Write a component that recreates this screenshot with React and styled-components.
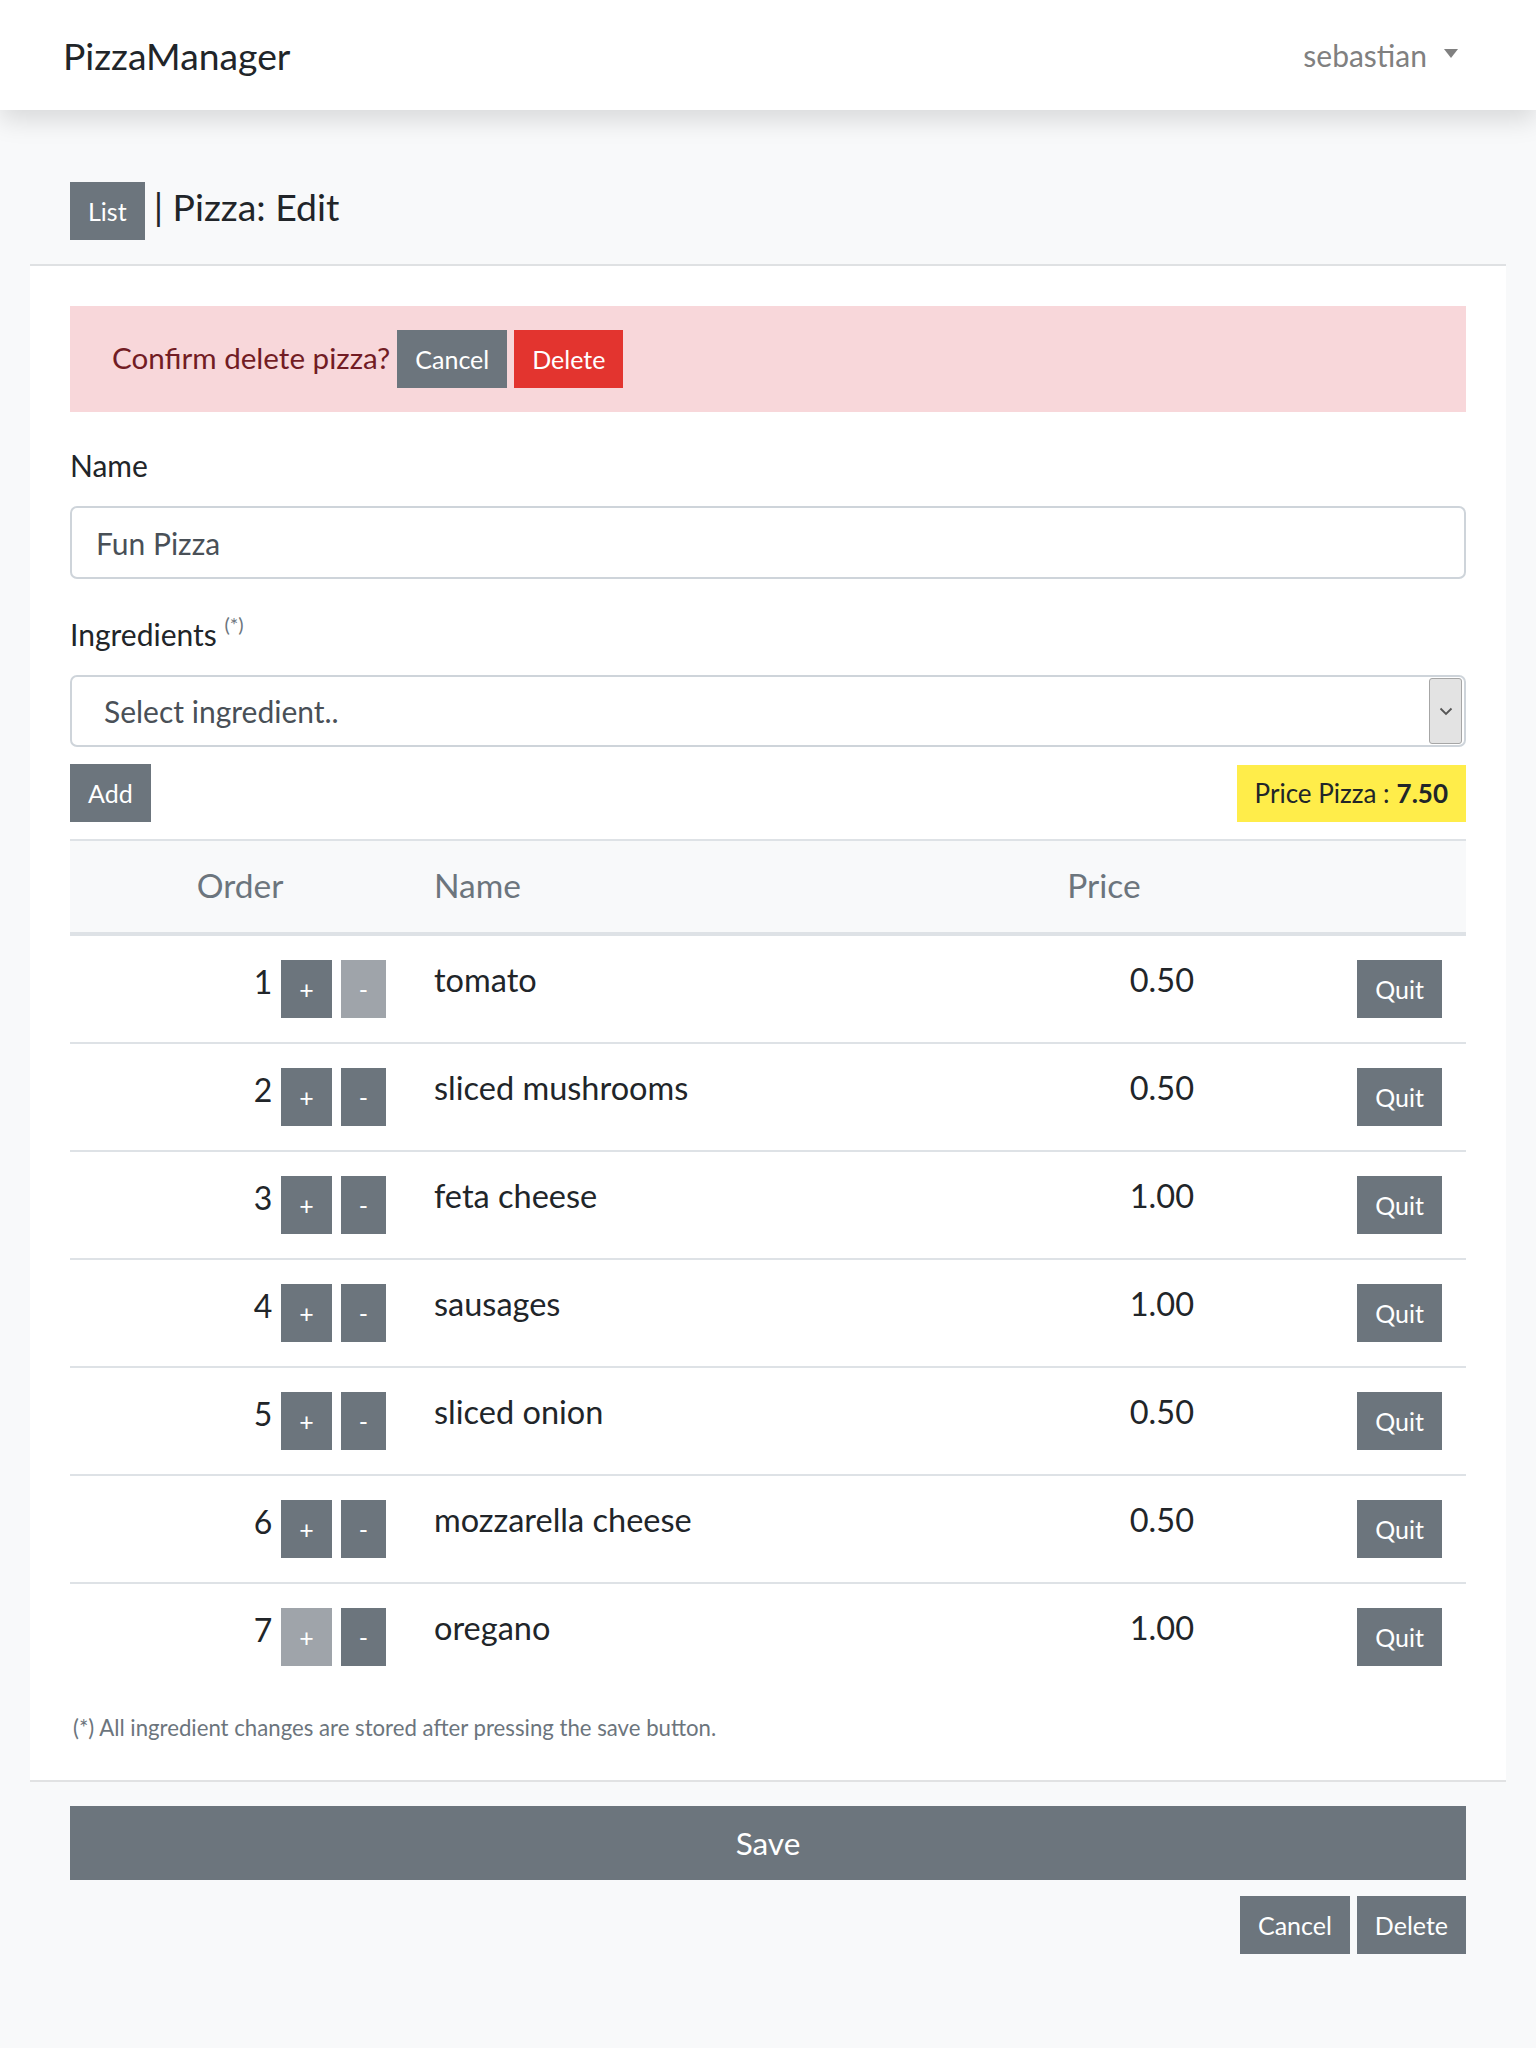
import styled, { createGlobalStyle } from "styled-components";

const ingredients = [
  { order: 1, name: "tomato", price: "0.50" },
  { order: 2, name: "sliced mushrooms", price: "0.50" },
  { order: 3, name: "feta cheese", price: "1.00" },
  { order: 4, name: "sausages", price: "1.00" },
  { order: 5, name: "sliced onion", price: "0.50" },
  { order: 6, name: "mozzarella cheese", price: "0.50" },
  { order: 7, name: "oregano", price: "1.00" },
];

const App = () => {
  return (
    <>
      <GlobalStyle />
      <Navbar>
        <Brand>PizzaManager</Brand>
        <UserMenu>
          sebastian
          <Caret />
        </UserMenu>
      </Navbar>

      <Card>
        <CardHeader>
          <Button>List</Button>
          <Title>| Pizza: Edit</Title>
        </CardHeader>

        <CardBody>
          <Alert>
            <AlertText>Confirm delete pizza?</AlertText>
            <Button>Cancel</Button>
            <Button $variant="danger">Delete</Button>
          </Alert>

          <FormGroup>
            <Label>Name</Label>
            <Input defaultValue="Fun Pizza" />
          </FormGroup>

          <FormGroup $tight>
            <Label>
              Ingredients <Sup>(*)</Sup>
            </Label>
            <SelectBox>
              <SelectText>Select ingredient..</SelectText>
              <SelectArrow>
                <svg width="14" height="9" viewBox="0 0 14 9">
                  <path
                    d="M1.5 1.5 L7 7 L12.5 1.5"
                    fill="none"
                    stroke="#555"
                    strokeWidth="1.8"
                  />
                </svg>
              </SelectArrow>
            </SelectBox>
          </FormGroup>

          <Toolbar>
            <Button>Add</Button>
            <PriceBadge>
              Price Pizza : <strong>7.50</strong>
            </PriceBadge>
          </Toolbar>

          <Table>
            <HeadRow>
              <HeadCell $align="center">Order</HeadCell>
              <HeadCell>Name</HeadCell>
              <HeadCell $align="center">Price</HeadCell>
              <HeadCell />
            </HeadRow>
            {ingredients.map((item, i) => (
              <Row key={item.order} $first={i === 0}>
                <OrderCell>
                  <OrderNumber>{item.order}</OrderNumber>
                  <Button $disabled={i === ingredients.length - 1}>+</Button>
                  <Button $disabled={i === 0}>-</Button>
                </OrderCell>
                <Cell>{item.name}</Cell>
                <Cell $align="right">{item.price}</Cell>
                <Cell $align="right">
                  <Button>Quit</Button>
                </Cell>
              </Row>
            ))}
          </Table>

          <Note>(*) All ingredient changes are stored after pressing the save button.</Note>
        </CardBody>

        <CardFooter>
          <SaveButton>Save</SaveButton>
          <FooterActions>
            <Button>Cancel</Button>
            <Button>Delete</Button>
          </FooterActions>
        </CardFooter>
      </Card>
    </>
  );
};

export default App;

const GlobalStyle = createGlobalStyle`
  * {
    box-sizing: border-box;
  }
  body {
    margin: 0;
    background: #f8f9fa;
    font-family: Lato, "Open Sans", sans-serif;
    color: #212529;
    min-height: 2048px;
  }
`;

const Navbar = styled.nav`
  height: 110px;
  background: #fff;
  display: flex;
  align-items: center;
  justify-content: space-between;
  padding: 0 78px 0 63px;
  box-shadow: 0 10px 24px rgba(0, 0, 0, 0.13);
  position: relative;
`;

const Brand = styled.div`
  font-size: 37.3px;
  color: #212529;
`;

const UserMenu = styled.div`
  display: flex;
  align-items: center;
  gap: 17px;
  font-size: 30px;
  color: #808080;
`;

const Caret = styled.span`
  width: 0;
  height: 0;
  border-left: 7.5px solid transparent;
  border-right: 7.5px solid transparent;
  border-top: 9px solid #808080;
  margin-top: -4px;
`;

const Card = styled.div`
  margin: 0 30px;
`;

const CardHeader = styled.div`
  display: flex;
  align-items: center;
  padding: 72px 40px 24px;
  border-bottom: 2px solid #dfe1e3;
`;

const Title = styled.h4`
  margin: 0 0 0 9px;
  font-weight: 400;
  font-size: 37.4px;
  line-height: 46px;
  padding-bottom: 8px;
`;

const CardBody = styled.div`
  background: #fff;
  padding: 40px 40px 36px;
  border-bottom: 2px solid #e1e2e3;
`;

const Button = styled.button`
  height: 58px;
  padding: 0 18px;
  border: none;
  border-radius: 0;
  font-family: inherit;
  font-size: 25px;
  color: #fff;
  background: ${(p) => (p.$variant === "danger" ? "#e3342f" : "#6c757d")};
  opacity: ${(p) => (p.$disabled ? 0.65 : 1)};
  cursor: pointer;
  flex-shrink: 0;
`;

const Alert = styled.div`
  display: flex;
  align-items: center;
  gap: 7px;
  background: #f8d7da;
  padding: 24px 42px;
  margin-bottom: 31px;
`;

const AlertText = styled.span`
  font-size: 29.6px;
  color: #721c24;
  padding-bottom: 4px;
`;

const FormGroup = styled.div`
  margin-bottom: ${(p) => (p.$tight ? "17px" : "33px")};
`;

const Label = styled.label`
  display: block;
  font-size: 30px;
  line-height: 45px;
  margin-bottom: 18px;
`;

const Sup = styled.sup`
  font-size: 20px;
  color: #6c757d;
  vertical-align: 14px;
  line-height: 0;
`;

const Input = styled.input`
  display: block;
  width: 100%;
  height: 73px;
  padding: 0 24px;
  font-family: inherit;
  font-size: 30px;
  color: #495057;
  border: 2px solid #ced4da;
  border-radius: 7px;
  outline: none;
`;

const SelectBox = styled.div`
  display: flex;
  align-items: center;
  justify-content: space-between;
  height: 72px;
  padding: 0 2px 0 32px;
  border: 2px solid #ced4da;
  border-radius: 7px;
`;

const SelectText = styled.span`
  font-size: 30px;
  color: #495057;
`;

const SelectArrow = styled.span`
  width: 33px;
  height: 66px;
  display: flex;
  align-items: center;
  justify-content: center;
  background: #e3e3e3;
  border: 1px solid #a6a6a6;
  border-radius: 3px;
`;

const Toolbar = styled.div`
  display: flex;
  justify-content: space-between;
  align-items: center;
  margin-bottom: 17px;
`;

const PriceBadge = styled.div`
  height: 57px;
  display: flex;
  align-items: center;
  gap: 7px;
  padding: 0 18px;
  background: #ffed4a;
  font-size: 26px;

  strong {
    font-weight: 700;
  }
`;

const Table = styled.div`
  display: grid;
  grid-template-columns: 340px 580px 228px 248px;
`;

const HeadRow = styled.div`
  display: contents;
`;

const HeadCell = styled.div`
  background: #f8f9fa;
  border-top: 2px solid #dee2e6;
  border-bottom: 4px solid #dee2e6;
  padding: 24px 24px 27px;
  font-size: 33.5px;
  line-height: 40px;
  color: #6c757d;
  text-align: ${(p) => p.$align || "left"};
`;

const Row = styled.div`
  display: contents;

  & > div {
    border-top: ${(p) => (p.$first ? "none" : "2px solid #dee2e6")};
  }
`;

const Cell = styled.div`
  padding: 24px;
  font-size: 32.5px;
  line-height: 40px;
  text-align: ${(p) => p.$align || "left"};
`;

const OrderCell = styled.div`
  display: flex;
  justify-content: flex-end;
  align-items: flex-start;
  gap: 9px;
  padding: 24px;
`;

const OrderNumber = styled.span`
  font-size: 32px;
  line-height: 44px;
`;

const Note = styled.p`
  margin: 22px 0 0 3px;
  font-size: 22.2px;
  line-height: 32px;
  color: #6c757d;
`;

const CardFooter = styled.div`
  padding: 24px 40px;
`;

const SaveButton = styled(Button)`
  display: block;
  width: 100%;
  height: 74px;
  font-size: 31.5px;
`;

const FooterActions = styled.div`
  display: flex;
  justify-content: flex-end;
  gap: 7px;
  margin-top: 16px;
`;
